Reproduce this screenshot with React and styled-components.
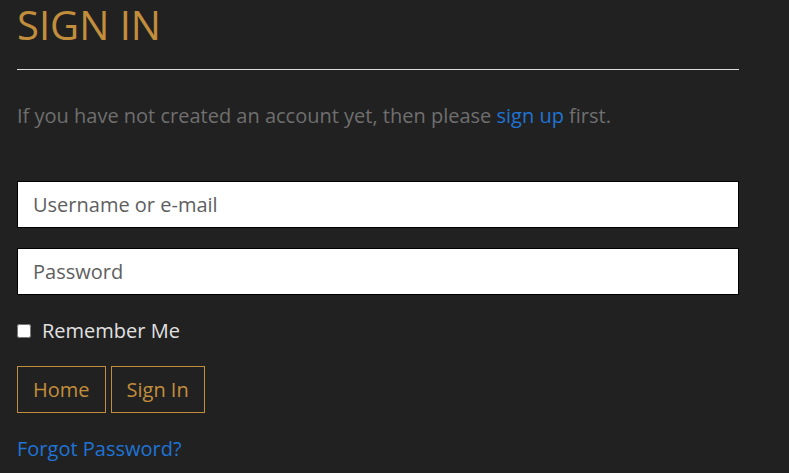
import React from 'react'
import styled, { createGlobalStyle } from 'styled-components'

const GlobalStyle = createGlobalStyle`
  html, body {
    margin: 0;
    padding: 0;
    background: #212121;
    font-family: "Open Sans", "Noto Sans", sans-serif;
  }
`

const Page = styled.div`
  width: 722px;
  padding: 3px 17px 0;
`

const Title = styled.h1`
  margin: 0;
  font-size: 40px;
  line-height: 44px;
  font-weight: 400;
  color: #c38e3c;
`

const Rule = styled.hr`
  margin: 22px 0 0;
  border: 0;
  border-top: 1px solid #dcdcdc;
`

const Intro = styled.p`
  margin: 33px 0 0;
  font-size: 20px;
  line-height: 26px;
  color: #6f6f6f;
`

const Link = styled.a`
  color: #1f74d6;
  text-decoration: none;
`

const Form = styled.form`
  margin-top: 52px;
  display: flex;
  flex-direction: column;
`

const Field = styled.input`
  box-sizing: border-box;
  width: 100%;
  height: 47px;
  margin-bottom: ${p => p.$last ? '0' : '20px'};
  padding: 0 15px;
  border: 1px solid #000;
  background: #fff;
  font-family: inherit;
  font-size: 20px;
  color: #333;
  outline: none;

  &::placeholder {
    color: #5e5e5e;
  }
`

const CheckRow = styled.label`
  display: flex;
  align-items: center;
  gap: 11px;
  margin-top: 23px;
  font-size: 20px;
  line-height: 26px;
  color: #e0e0e0;

  input {
    margin: 0;
    width: 14px;
    height: 14px;
  }
`

const Buttons = styled.div`
  display: flex;
  gap: 5px;
  margin-top: 22px;
`

const Button = styled.button`
  box-sizing: border-box;
  height: 47px;
  padding: 0 15px;
  background: transparent;
  border: 1px solid #c38e3c;
  color: #c38e3c;
  font-family: inherit;
  font-size: 20px;
  cursor: pointer;
`

const Forgot = styled(Link)`
  display: block;
  margin-top: 23px;
  font-size: 20px;
  line-height: 26px;
`

export default function App() {
  return (
    <Page>
      <GlobalStyle />
      <Title>SIGN IN</Title>
      <Rule />
      <Intro>
        If you have not created an account yet, then please <Link href="#">sign up</Link> first.
      </Intro>
      <Form onSubmit={e => e.preventDefault()}>
        <Field type="text" placeholder="Username or e-mail" />
        <Field type="password" placeholder="Password" $last />
        <CheckRow>
          <input type="checkbox" />
          Remember Me
        </CheckRow>
        <Buttons>
          <Button type="button">Home</Button>
          <Button type="submit">Sign In</Button>
        </Buttons>
      </Form>
      <Forgot href="#">Forgot Password?</Forgot>
    </Page>
  )
}
